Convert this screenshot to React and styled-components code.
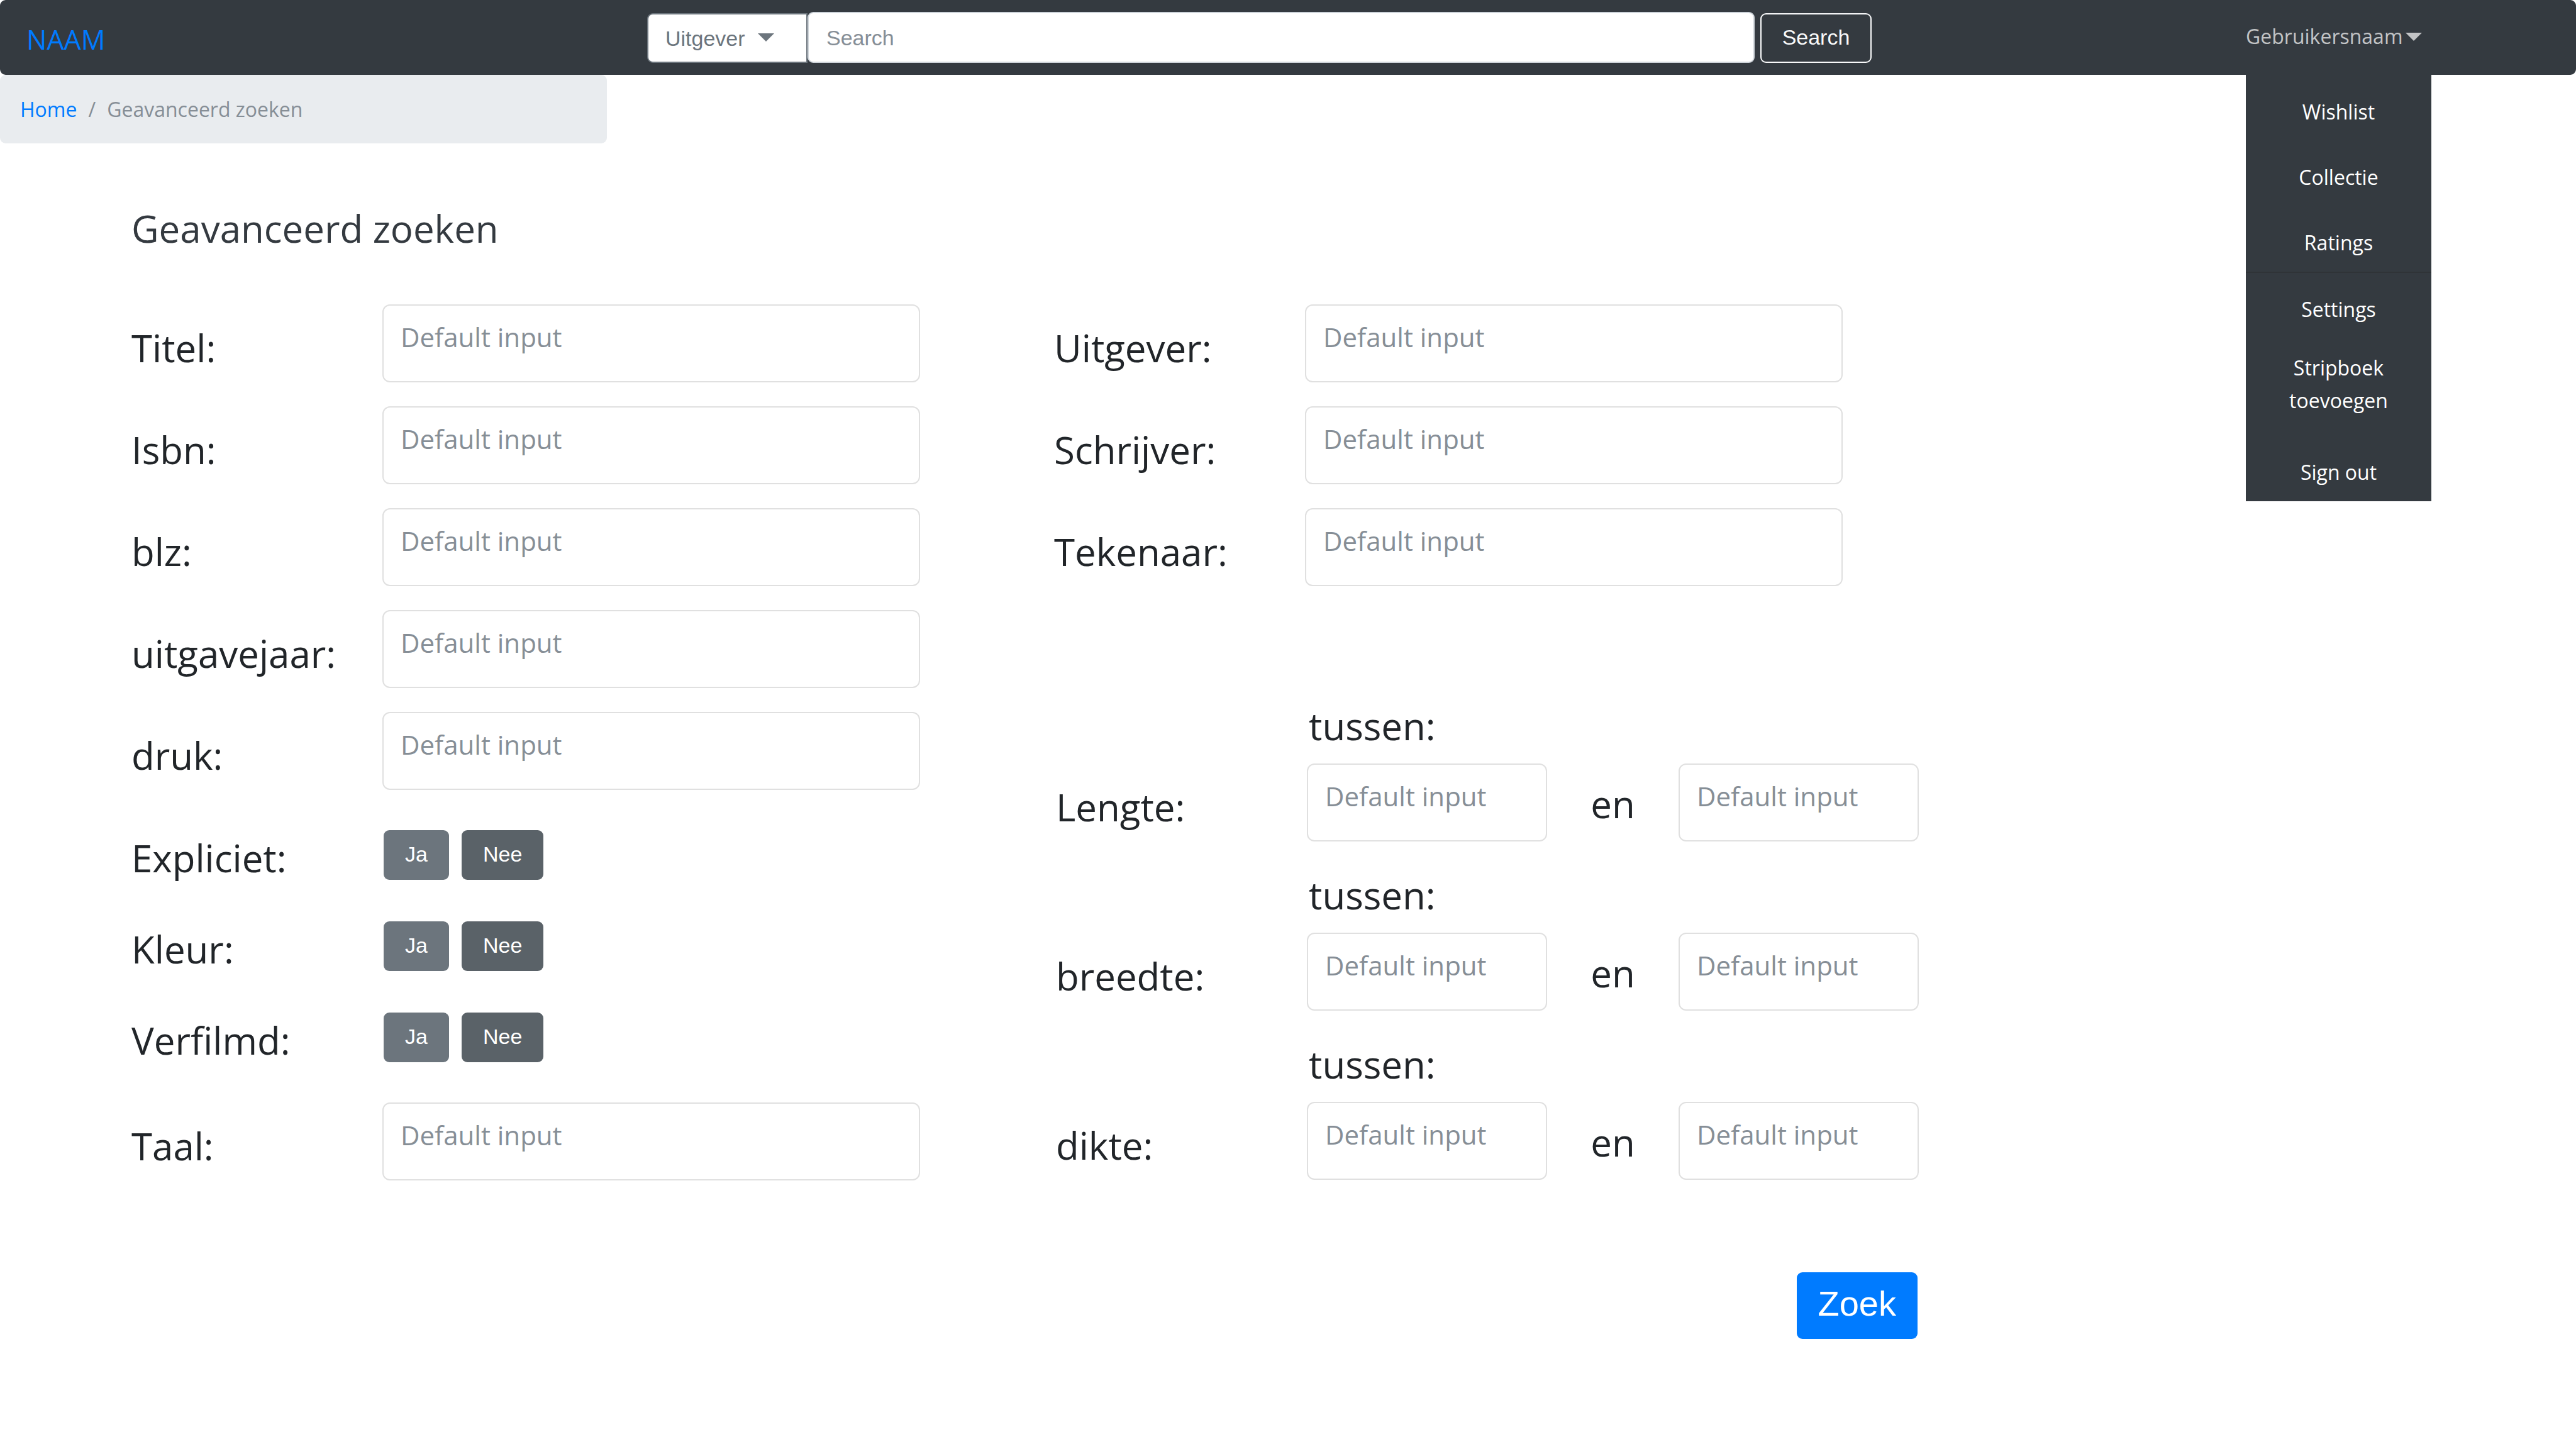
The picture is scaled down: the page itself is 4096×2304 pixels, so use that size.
import React, { useState } from "react";
import styled, { createGlobalStyle } from "styled-components";

const sans = '"Segoe UI", "Open Sans", "Noto Sans", sans-serif';
const arial = '"Liberation Sans", Arial, sans-serif';

const colors = {
  dark: "#343a40",
  primary: "#007bff",
  secondary: "#6c757d",
  secondaryActive: "#5a6268",
  text: "#212529",
  muted: "#868e96",
  crumb: "#e9ecef",
  inputBorder: "#e0e0e0",
  searchBorder: "#ced4da",
  light: "#f8f9fa",
};

const GlobalStyle = createGlobalStyle`
  *, *::before, *::after { box-sizing: border-box; }
  body { margin: 0; background: #fff; color: ${colors.text}; font-family: ${sans}; }
  button, input, select { margin: 0; font: inherit; }
`;

const Navbar = styled.header`
  display: grid;
  grid-template-columns: 987fr 1947fr 595fr 295px;
  align-items: center;
  padding: 0 230px 0 42px;
  border-radius: 9px;
  background: ${colors.dark};
`;

const Brand = styled.a`
  padding-top: 6px;
  color: ${colors.primary};
  font-size: 43px;
  line-height: 56px;
  text-decoration: none;
`;

const SearchForm = styled.form`
  display: flex;
  align-items: flex-end;
  padding: 19px 0;
`;

const SelectWrap = styled.div`
  position: relative;
  width: 255px;
  height: 79px;
`;

const Select = styled.select`
  appearance: none;
  width: 100%;
  height: 100%;
  padding: 0 27px;
  border: 2px solid ${colors.secondary};
  border-radius: 9px 0 0 9px;
  background: #fff;
  color: ${colors.secondary};
  font-family: ${arial};
  font-size: 34px;
`;

const CaretSvg = styled.svg`
  display: block;
  width: 26px;
  height: 13px;
  fill: currentColor;
`;

const SelectCaret = styled.span`
  position: absolute;
  top: 32px;
  right: 53px;
  color: ${colors.secondary};
  pointer-events: none;
`;

const SearchInput = styled.input`
  flex: 1;
  min-width: 0;
  height: 81px;
  margin-right: 9px;
  padding: 2px 28px 0;
  border: 2px solid ${colors.searchBorder};
  border-radius: 9px;
  background: #fff;
  color: ${colors.text};
  font-family: ${arial};
  font-size: 34px;
  &::placeholder { color: ${colors.muted}; opacity: 1; }
`;

const Button = styled.button`
  height: 79px;
  padding: 0 34px 4px;
  border: 0;
  border-radius: 9px;
  background: ${(p) => (p.$active ? colors.secondaryActive : colors.secondary)};
  color: #fff;
  font-family: ${arial};
  font-size: 34px;
  line-height: 40px;
  cursor: pointer;
`;

const SearchButton = styled(Button)`
  width: 177px;
  padding: 0 0 4px;
  border: 2px solid ${colors.light};
  background: transparent;
  color: ${colors.light};
`;

const UserArea = styled.nav`
  position: relative;
  grid-column: 4;
  align-self: stretch;
  display: flex;
  align-items: center;
`;

const UserToggle = styled.button`
  display: flex;
  align-items: center;
  gap: 4px;
  padding: 0 0 3px;
  border: 0;
  background: none;
  color: #c2c4c6;
  font-size: 32px;
  line-height: 44px;
  cursor: pointer;
`;

const Menu = styled.ul`
  position: absolute;
  top: 100%;
  left: 0;
  width: 100%;
  margin: 0;
  padding: 1px 0 0;
  background: ${colors.dark};
  list-style: none;
`;

const MenuItem = styled.li`
  border-top: ${(p) => (p.$divided ? "2px solid #2f3337" : "0")};
`;

const MenuLink = styled.a`
  display: block;
  padding: ${(p) => (p.$wrapped ? "21px 40px 30px" : "32px 40px 20px")};
  color: #fff;
  font-size: 32px;
  line-height: 52px;
  text-align: center;
  text-decoration: none;
`;

const Breadcrumb = styled.nav`
  display: flex;
  gap: 18px;
  width: 965px;
  max-width: 100%;
  padding: 29px 32px 28px;
  border-radius: 9px;
  background: ${colors.crumb};
  color: ${colors.muted};
  font-size: 32px;
  line-height: 52px;
`;

const CrumbLink = styled.a`
  color: ${colors.primary};
  text-decoration: none;
`;

const Page = styled.main`
  padding: 95px 1045px 64px 209px;
`;

const Title = styled.h1`
  margin: 0 0 81px;
  color: ${colors.dark};
  font-size: 60px;
  font-weight: 400;
  line-height: 80px;
`;

const Columns = styled.div`
  display: grid;
  grid-template-columns: 1254fr 1375fr;
  align-items: start;
  column-gap: 213px;
`;

const Column = styled.div`
  display: flex;
  flex-direction: column;
  gap: ${(p) => p.$gap}px;
`;

const FieldRow = styled.div`
  display: grid;
  grid-template-columns: 399px 855fr ${(p) => (p.$short ? "121fr" : "")};
`;

const labelText = `
  font-size: 60px;
  line-height: 80px;
  white-space: nowrap;
`;

const Label = styled.label`
  ${labelText}
  padding-top: 29px;
`;

const ToggleRow = styled.div`
  display: grid;
  grid-template-columns: 401px 1fr;
  height: 79px;
`;

const ToggleLabel = styled.span`
  ${labelText}
  padding-top: 4px;
`;

const ToggleButtons = styled.div`
  display: flex;
  align-items: flex-start;
  gap: 20px;
`;

const TextInput = styled.input`
  width: 100%;
  min-width: 0;
  height: 124px;
  padding: 0 27px 22px;
  border: 2px solid ${colors.inputBorder};
  border-radius: 12px;
  background: #fff;
  color: ${colors.text};
  font-size: 42px;
  &::placeholder { color: ${colors.muted}; opacity: 1; }
`;

const RangeGroup = styled.div`
  display: grid;
  grid-template-columns: 399px 382fr 209fr 382fr;
  row-gap: 20px;
  padding-left: 3px;
`;

const RangeFrom = styled.label`
  ${labelText}
  grid-column: 2 / -1;
  padding-left: 3px;
`;

const RangeName = styled.span`
  ${labelText}
  padding-top: 29px;
`;

const RangeTo = styled.label`
  ${labelText}
  padding-top: 24px;
  text-align: center;
`;

const Actions = styled.div`
  display: flex;
  justify-content: flex-end;
  margin-top: 146px;
  padding-right: 2px;
`;

const SubmitButton = styled(Button)`
  height: 106px;
  padding: 0 34px 6px;
  background: ${colors.primary};
  font-size: 56px;
  line-height: 64px;
`;

function Caret() {
  return (
    <CaretSvg viewBox="0 0 26 13" aria-hidden="true">
      <path d="M0 0h26L13 13z" />
    </CaretSvg>
  );
}

function Field({ id, label, short }) {
  return (
    <FieldRow $short={short}>
      <Label htmlFor={id}>{label}</Label>
      <TextInput id={id} name={id} type="text" placeholder="Default input" />
    </FieldRow>
  );
}

function YesNo({ id, label }) {
  const [value, setValue] = useState("nee");
  return (
    <ToggleRow role="group" aria-labelledby={id}>
      <ToggleLabel id={id}>{label}</ToggleLabel>
      <ToggleButtons>
        <Button type="button" $active={value === "ja"} aria-pressed={value === "ja"} onClick={() => setValue("ja")}>
          Ja
        </Button>
        <Button type="button" $active={value === "nee"} aria-pressed={value === "nee"} onClick={() => setValue("nee")}>
          Nee
        </Button>
      </ToggleButtons>
    </ToggleRow>
  );
}

function Range({ id, label }) {
  return (
    <RangeGroup role="group" aria-labelledby={id}>
      <RangeFrom htmlFor={id + "-van"}>tussen:</RangeFrom>
      <RangeName id={id}>{label}</RangeName>
      <TextInput id={id + "-van"} type="text" placeholder="Default input" />
      <RangeTo htmlFor={id + "-tot"}>en</RangeTo>
      <TextInput id={id + "-tot"} type="text" placeholder="Default input" />
    </RangeGroup>
  );
}

const menuItems = [
  { label: "Wishlist" },
  { label: "Collectie" },
  { label: "Ratings" },
  { label: "Settings", divided: true },
  { label: "Stripboek toevoegen", wrapped: true },
  { label: "Sign out" },
];

export default function App() {
  const [open, setOpen] = useState(true);
  return (
    <>
      <GlobalStyle />
      <Navbar>
        <Brand href="#">NAAM</Brand>
        <SearchForm role="search" onSubmit={(e) => e.preventDefault()}>
          <SelectWrap>
            <Select aria-label="Zoekveld" defaultValue="Uitgever">
              <option>Uitgever</option>
            </Select>
            <SelectCaret>
              <Caret />
            </SelectCaret>
          </SelectWrap>
          <SearchInput type="text" aria-label="Search" placeholder="Search" />
          <SearchButton type="submit">Search</SearchButton>
        </SearchForm>
        <UserArea>
          <UserToggle type="button" aria-expanded={open} onClick={() => setOpen(!open)}>
            Gebruikersnaam
            <Caret />
          </UserToggle>
          {open && (
            <Menu>
              {menuItems.map((item) => (
                <MenuItem key={item.label} $divided={item.divided}>
                  <MenuLink href="#" $wrapped={item.wrapped}>
                    {item.label}
                  </MenuLink>
                </MenuItem>
              ))}
            </Menu>
          )}
        </UserArea>
      </Navbar>

      <Breadcrumb aria-label="Breadcrumb">
        <CrumbLink href="#">Home</CrumbLink>
        <span>/</span>
        <span>Geavanceerd zoeken</span>
      </Breadcrumb>

      <Page>
        <Title>Geavanceerd zoeken</Title>
        <form onSubmit={(e) => e.preventDefault()}>
          <Columns>
            <Column $gap={64}>
              <Column $gap={38}>
                <Field id="titel" label="Titel:" />
                <Field id="isbn" label="Isbn:" />
                <Field id="blz" label="blz:" />
                <Field id="uitgavejaar" label="uitgavejaar:" />
                <Field id="druk" label="druk:" />
              </Column>
              <Column $gap={66}>
                <YesNo id="expliciet" label="Expliciet:" />
                <YesNo id="kleur" label="Kleur:" />
                <YesNo id="verfilmd" label="Verfilmd:" />
              </Column>
              <Field id="taal" label="Taal:" />
            </Column>
            <Column $gap={182}>
              <Column $gap={38}>
                <Field id="uitgever" label="Uitgever:" short />
                <Field id="schrijver" label="Schrijver:" short />
                <Field id="tekenaar" label="Tekenaar:" short />
              </Column>
              <Column $gap={45}>
                <Range id="lengte" label="Lengte:" />
                <Range id="breedte" label="breedte:" />
                <Range id="dikte" label="dikte:" />
              </Column>
            </Column>
          </Columns>
          <Actions>
            <SubmitButton type="submit">Zoek</SubmitButton>
          </Actions>
        </form>
      </Page>
    </>
  );
}
